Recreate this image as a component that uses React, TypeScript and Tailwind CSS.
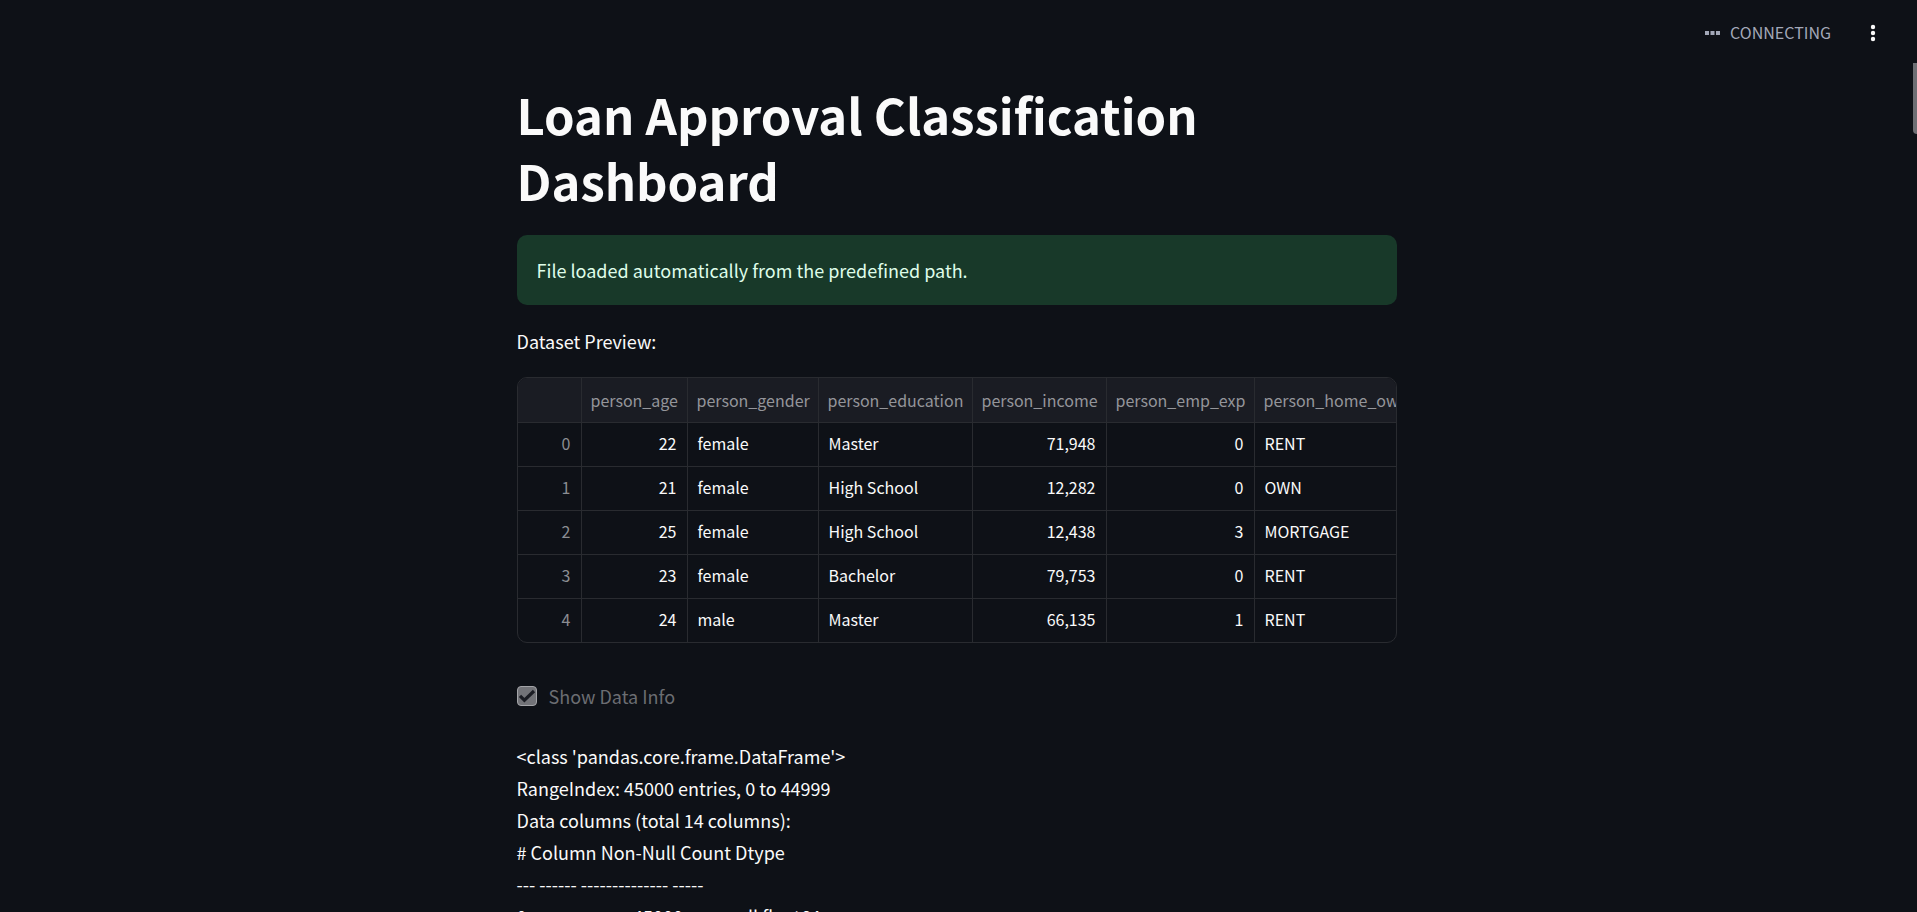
type Row = {
  age: number;
  gender: string;
  education: string;
  income: string;
  experience: number;
  home: string;
};

const columns = [
  { name: "person_age", width: "w-[106px]" },
  { name: "person_gender", width: "w-[131px]" },
  { name: "person_education", width: "w-[154px]" },
  { name: "person_income", width: "w-[134px]" },
  { name: "person_emp_exp", width: "w-[148px]" },
  { name: "person_home_ownership", width: "w-auto" },
];

const rows: Row[] = [
  { age: 22, gender: "female", education: "Master", income: "71,948", experience: 0, home: "RENT" },
  { age: 21, gender: "female", education: "High School", income: "12,282", experience: 0, home: "OWN" },
  { age: 25, gender: "female", education: "High School", income: "12,438", experience: 3, home: "MORTGAGE" },
  { age: 23, gender: "female", education: "Bachelor", income: "79,753", experience: 0, home: "RENT" },
  { age: 24, gender: "male", education: "Master", income: "66,135", experience: 1, home: "RENT" },
];

const info = [
  "<class 'pandas.core.frame.DataFrame'>",
  "RangeIndex: 45000 entries, 0 to 44999",
  "Data columns (total 14 columns):",
  "# Column Non-Null Count Dtype",
  "--- ------ -------------- -----",
  "0 person_age 45000 non-null float64",
];

function Header() {
  return (
    <header className="flex h-[63px] shrink-0 items-center justify-end gap-7 pr-[30px] pt-[3px]">
      <div className="flex items-center gap-[10px] text-[#a3a8b8]">
        <svg width="15" height="4" viewBox="0 0 15 4" fill="currentColor" aria-hidden="true">
          <rect width="4" height="4" />
          <rect x="5.5" width="4" height="4" />
          <rect x="11" width="4" height="4" />
        </svg>
        <span className="pb-[3px] text-base leading-6">CONNECTING</span>
      </div>
      <button type="button" aria-label="Main menu" className="flex h-7 w-7 items-center justify-center text-[#fafafa]">
        <svg width="6" height="18" viewBox="0 0 6 18" fill="currentColor" aria-hidden="true">
          <circle cx="3" cy="3" r="2.2" />
          <circle cx="3" cy="9" r="2.2" />
          <circle cx="3" cy="15" r="2.2" />
        </svg>
      </button>
    </header>
  );
}

function DataPreview() {
  const edge = "overflow-hidden whitespace-nowrap border-b border-r border-[#292b30] last:border-r-0";
  const cell = `${edge} px-[10px] pt-0 pb-[3px]`;
  return (
    <div className="overflow-hidden rounded-[10px] border border-[#292b30]">
      <table className="w-full table-fixed border-separate border-spacing-0 text-base leading-6">
        <thead className="bg-[#1a1c23] text-[#94959a]">
          <tr className="h-[45px]">
            <th className={`${edge} w-[64px]`} aria-label="Index" />
            {columns.map((c) => (
              <th key={c.name} scope="col" className={`${edge} ${c.width} pl-[9px] pb-px text-left font-normal`}>
                {c.name}
              </th>
            ))}
          </tr>
        </thead>
        <tbody className="text-[#fafafa] [&>tr:last-child>*]:border-b-0">
          {rows.map((r, i) => (
            <tr key={i} className="h-[44px] last:h-[43px]">
              <th scope="row" className={`${cell} text-right font-normal text-[#8b8d92]`}>{i}</th>
              <td className={`${cell} text-right`}>{r.age}</td>
              <td className={cell}>{r.gender}</td>
              <td className={cell}>{r.education}</td>
              <td className={`${cell} text-right`}>{r.income}</td>
              <td className={`${cell} text-right`}>{r.experience}</td>
              <td className={cell}>{r.home}</td>
            </tr>
          ))}
        </tbody>
      </table>
    </div>
  );
}

export default function App() {
  return (
    <div className="flex h-screen flex-col overflow-hidden bg-[#0e1117] font-['Noto_Sans_CJK_SC',sans-serif] text-[#fafafa]">
      <Header />
      <div className="flex min-h-0 flex-1">
        <main className="min-w-0 flex-1 overflow-hidden px-5 pt-[18px]">
          <div className="mx-auto max-w-[880px]">
            <h1 className="text-[49px] font-bold leading-[66px]">Loan Approval Classification Dashboard</h1>
            <div role="status" className="mt-[22px] rounded-[10px] bg-[#183929] px-5 py-[19px] text-lg leading-8 text-[#dffde9]">
              File loaded automatically from the predefined path.
            </div>
            <p className="my-5 text-lg leading-8">Dataset Preview:</p>
            <DataPreview />
            <label className="mt-[37px] flex items-center gap-3 text-lg leading-8 text-[#6b6d72]">
              <span className="grid h-5 w-5">
                <input
                  type="checkbox"
                  defaultChecked
                  disabled
                  className="col-start-1 row-start-1 h-5 w-5 appearance-none rounded border border-[#a3a4a8] bg-[#727378]"
                />
                <svg viewBox="0 0 20 20" className="col-start-1 row-start-1 h-5 w-5" fill="none" stroke="#1a1c23" strokeWidth="3.2" aria-hidden="true">
                  <path d="M3 9.8 7.4 14.2 17 5" />
                </svg>
              </span>
              Show Data Info
            </label>
            <div className="mt-7 text-lg leading-8">
              {info.map((line) => (
                <p key={line}>{line}</p>
              ))}
            </div>
          </div>
        </main>
        <div className="w-1" aria-hidden="true">
          <div className="h-[71px] rounded-bl bg-[#6e6f74]" />
        </div>
      </div>
    </div>
  );
}
